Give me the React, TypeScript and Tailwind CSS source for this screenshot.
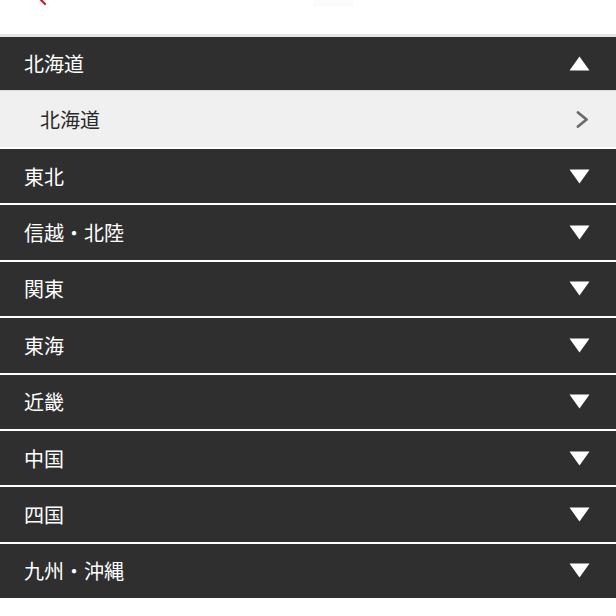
import React from "react";

const regions = ["東北", "信越・北陸", "関東", "東海", "近畿", "中国", "四国", "九州・沖縄"];

function TriUp() {
  return (
    <svg width="21" height="15" viewBox="0 0 21 15" className="block">
      <polygon points="10.5,0.5 20.5,14.5 0.5,14.5" fill="#ffffff" />
    </svg>
  );
}

function TriDown() {
  return (
    <svg width="21" height="15" viewBox="0 0 21 15" className="block">
      <polygon points="0.5,0.5 20.5,0.5 10.5,14.5" fill="#ffffff" />
    </svg>
  );
}

function Chevron() {
  return (
    <svg width="13" height="17" viewBox="0 0 13 17" className="block">
      <polyline points="2,1.5 10.5,8.5 2,15.5" fill="none" stroke="#6b6b6b" strokeWidth="2.8" strokeLinecap="round" strokeLinejoin="round" />
    </svg>
  );
}

export default function App() {
  return (
    <div
      className="w-[616px] h-[616px] bg-white overflow-hidden"
      style={{ fontFamily: '"Noto Sans CJK JP", "Noto Sans", sans-serif' }}
    >
      <div className="h-[34px] relative">
        <svg width="20" height="10" viewBox="0 0 20 10" className="absolute left-[34px] top-0">
          <line x1="3" y1="-4" x2="11" y2="4" stroke="#c8202c" strokeWidth="2.2" strokeLinecap="round" />
        </svg>
        <div className="absolute left-[313px] top-0 w-[40px] h-[7px] bg-[#fbfbfb]" />
      </div>
      <div className="h-[3px] bg-[#e4e4e4]" />
      <div className="h-[53px] bg-[#2f2f2f] flex items-center justify-between pl-[24px] pr-[26px]">
        <span className="text-[20px] leading-none text-white pt-[1px]">北海道</span>
        <TriUp />
      </div>
      <div className="h-[57px] bg-[#f0f0f0] border-t border-[#dcdcdc] flex items-center justify-between pl-[40px] pr-[27px]">
        <span className="text-[20px] leading-none text-[#2a2a2a] pt-[1px]">北海道</span>
        <Chevron />
      </div>
      {regions.map((r) => (
        <div
          key={r}
          className="h-[56.4px] bg-[#2f2f2f] border-t-2 border-white flex items-center justify-between pl-[24px] pr-[26px]"
        >
          <span className="text-[20px] leading-none text-white pt-[1px]">{r}</span>
          <TriDown />
        </div>
      ))}
    </div>
  );
}
